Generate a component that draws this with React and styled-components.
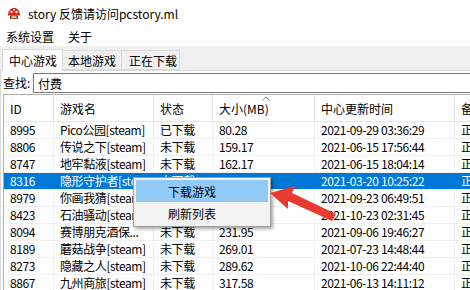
import React from "react"
import styled, { createGlobalStyle } from "styled-components"

const GlobalStyle = createGlobalStyle`
  html, body {
    margin: 0;
    padding: 0;
    background: #ffffff;
    overflow: hidden;
  }
  body {
    font-family: "Noto Sans CJK SC", "Noto Sans", sans-serif;
    font-size: 12px;
    color: #000;
  }
`

const Window = styled.div`
  width: 470px;
  height: 290px;
  display: flex;
  flex-direction: column;
  overflow: hidden;
  background: #fff;
`

const TitleBar = styled.div`
  height: 28px;
  display: flex;
  align-items: center;
  gap: 7px;
  padding-left: 7px;
  flex-shrink: 0;
`

const Title = styled.span`
  font-size: 12px;
  line-height: 1;
`

const MenuBar = styled.div`
  height: 18px;
  display: flex;
  align-items: center;
  flex-shrink: 0;
`

const MenuItem = styled.span`
  padding: 0 7px 0 ${({ $first }) => ($first ? 6 : 7)}px;
  line-height: 18px;
`

const TabArea = styled.div`
  flex: 1;
  display: flex;
  flex-direction: column;
  background: #f0f0f0;
  min-height: 0;
`

const TabStrip = styled.div`
  height: 24px;
  display: flex;
  align-items: flex-end;
  padding-left: 2px;
  flex-shrink: 0;
`

const Tab = styled.div`
  box-sizing: border-box;
  height: ${({ $active }) => ($active ? 22 : 20)}px;
  width: ${({ $w }) => $w}px;
  padding-left: ${({ $pad }) => $pad}px;
  display: flex;
  align-items: center;
  background: ${({ $active }) => ($active ? "#fff" : "#f0f0f0")};
  border: 1px solid #d9d9d9;
  border-bottom: ${({ $active }) => ($active ? "none" : "1px solid #d9d9d9")};
  border-left: ${({ $first }) => ($first ? "1px solid #d9d9d9" : "none")};
  margin-bottom: ${({ $active }) => ($active ? "-1px" : "0")};
  position: relative;
  z-index: ${({ $active }) => ($active ? 1 : 0)};
`

const TabPage = styled.div`
  flex: 1;
  min-height: 0;
  background: #fff;
  border-top: 1px solid #d9d9d9;
  border-left: 1px solid #d9d9d9;
  padding: 2px 0 0 2px;
  display: flex;
  flex-direction: column;
  overflow: hidden;
`

const SearchRow = styled.div`
  display: flex;
  align-items: center;
  height: 20px;
  flex-shrink: 0;
`

const SearchLabel = styled.span`
  width: 30px;
  margin-top: -1px;
`

const SearchBox = styled.div`
  box-sizing: border-box;
  flex: 1;
  height: 20px;
  border: 1px solid #7a7a7a;
  border-right: none;
  padding-left: 4px;
  display: flex;
  align-items: center;
`

const ListView = styled.div`
  position: relative;
  margin-top: 1px;
  flex: 1;
  border-top: 1px solid #adadad;
  border-left: 1px solid #adadad;
  display: flex;
  flex-direction: column;
`

const HeaderRow = styled.div`
  box-sizing: border-box;
  height: 27px;
  display: flex;
  border-bottom: 1px solid #e5e5e5;
  flex-shrink: 0;
`

const HeaderCell = styled.div`
  position: relative;
  box-sizing: border-box;
  width: ${({ $w }) => $w}px;
  flex-shrink: 0;
  padding-left: 6px;
  display: flex;
  align-items: center;
  border-right: 1px solid #e5e5e5;
  white-space: nowrap;
`

const SortMark = styled.svg`
  position: absolute;
  left: 49px;
  top: 1px;
`

const Row = styled.div`
  box-sizing: border-box;
  height: 17px;
  display: flex;
  border-bottom: 1px solid #f0f0f0;
  background: ${({ $selected }) => ($selected ? "#0078d7" : "transparent")};
  color: ${({ $selected }) => ($selected ? "#fff" : "#000")};
  flex-shrink: 0;
`

const Cell = styled.div`
  box-sizing: border-box;
  width: ${({ $w }) => $w}px;
  flex-shrink: 0;
  padding-left: 6px;
  line-height: 16px;
  letter-spacing: -0.4px;
  white-space: nowrap;
  overflow: hidden;
  text-overflow: ellipsis;
  border-right: 1px solid ${({ $selected }) => ($selected ? "#0078d7" : "#f0f0f0")};
`

const ContextMenu = styled.div`
  position: absolute;
  left: 129px;
  top: 82px;
  width: 138px;
  box-sizing: border-box;
  background: #f2f2f2;
  border: 1px solid #a0a0a0;
  padding: 2px;
  box-shadow: 2px 2px 3px rgba(0, 0, 0, 0.35);
  z-index: 5;
`

const MenuEntry = styled.div`
  height: 22px;
  display: flex;
  align-items: center;
  padding-left: 32px;
  background: ${({ $hover }) => ($hover ? "#91c9f7" : "transparent")};
`

const Arrow = styled.svg`
  position: absolute;
  left: 262px;
  top: 87px;
  z-index: 6;
`

const columns = [50, 100, 59, 102, 140, 60]

const rows = [
  ["8995", "Pico公园[steam]", "已下载", "80.28", "2021-09-29 03:36:29", "正"],
  ["8806", "传说之下[steam]", "未下载", "159.17", "2021-06-15 17:56:44", "正"],
  ["8747", "地牢黏液[steam]", "未下载", "162.17", "2021-06-15 18:04:14", "正"],
  ["8316", "隐形守护者[steam]", "未下载", "174.52", "2021-03-20 10:25:22", "正"],
  ["8979", "你画我猜[steam]", "未下载", "188.40", "2021-09-23 06:49:51", "正"],
  ["8423", "石油骚动[steam]", "未下载", "205.13", "2021-10-23 02:31:45", "正"],
  ["8094", "赛博朋克酒保...", "未下载", "231.95", "2021-09-06 19:46:27", "正"],
  ["8189", "蘑菇战争[steam]", "未下载", "269.01", "2021-07-23 14:48:44", "正"],
  ["8273", "隐藏之人[steam]", "未下载", "289.62", "2021-10-06 22:44:40", "正"],
  ["8867", "九州商旅[steam]", "未下载", "317.58", "2021-06-13 14:11:12", "正"],
]

const AppIcon = () => (
  <svg width="14" height="14" viewBox="0 0 14 14">
    <path d="M1 8.5 C1 3.5 4 1 7 1 C10 1 13 3.5 13 8.5 Z" fill="#d8261c" />
    <circle cx="4.5" cy="5" r="1.2" fill="#fff" />
    <circle cx="9.5" cy="5" r="1.2" fill="#fff" />
    <circle cx="7" cy="2.8" r="0.9" fill="#fff" />
    <rect x="3" y="8.5" width="8" height="3.5" rx="1" fill="#7a2a18" />
    <rect x="4.5" y="9.2" width="5" height="2" fill="#f3c9a0" />
  </svg>
)

export default function App() {
  return (
    <Window>
      <GlobalStyle />
      <TitleBar>
        <AppIcon />
        <Title>story 反馈请访问pcstory.ml</Title>
      </TitleBar>
      <MenuBar>
        <MenuItem $first>系统设置</MenuItem>
        <MenuItem>关于</MenuItem>
      </MenuBar>
      <TabArea>
        <TabStrip>
          <Tab $active $first $w={61} $pad={6}>中心游戏</Tab>
          <Tab $w={59} $pad={5}>本地游戏</Tab>
          <Tab $w={58} $pad={7}>正在下载</Tab>
        </TabStrip>
        <TabPage>
          <SearchRow>
            <SearchLabel>查找:</SearchLabel>
            <SearchBox>付费</SearchBox>
          </SearchRow>
          <ListView>
            <HeaderRow>
              <HeaderCell $w={columns[0]}>ID</HeaderCell>
              <HeaderCell $w={columns[1]}>游戏名</HeaderCell>
              <HeaderCell $w={columns[2]}>状态</HeaderCell>
              <HeaderCell $w={columns[3]}>
                大小(MB)
                <SortMark width="8" height="5" viewBox="0 0 8 5">
                  <path d="M0.5 4.5 L4 1 L7.5 4.5" fill="none" stroke="#8a8a8a" strokeWidth="1" />
                </SortMark>
              </HeaderCell>
              <HeaderCell $w={columns[4]}>中心更新时间</HeaderCell>
              <HeaderCell $w={columns[5]}>备注</HeaderCell>
            </HeaderRow>
            {rows.map((r, i) => (
              <Row key={r[0]} $selected={i === 3}>
                {r.map((v, j) => (
                  <Cell key={j} $w={columns[j]} $selected={i === 3}>
                    {v}
                  </Cell>
                ))}
              </Row>
            ))}
            <ContextMenu>
              <MenuEntry $hover>下载游戏</MenuEntry>
              <MenuEntry>刷新列表</MenuEntry>
            </ContextMenu>
            <Arrow width="75" height="45" viewBox="265 180 75 45">
              <polygon
                points="269,191 294,184 291,191 335,212 331,219 287,199 287,207"
                fill="#e83a30"
              />
            </Arrow>
          </ListView>
        </TabPage>
      </TabArea>
    </Window>
  )
}
